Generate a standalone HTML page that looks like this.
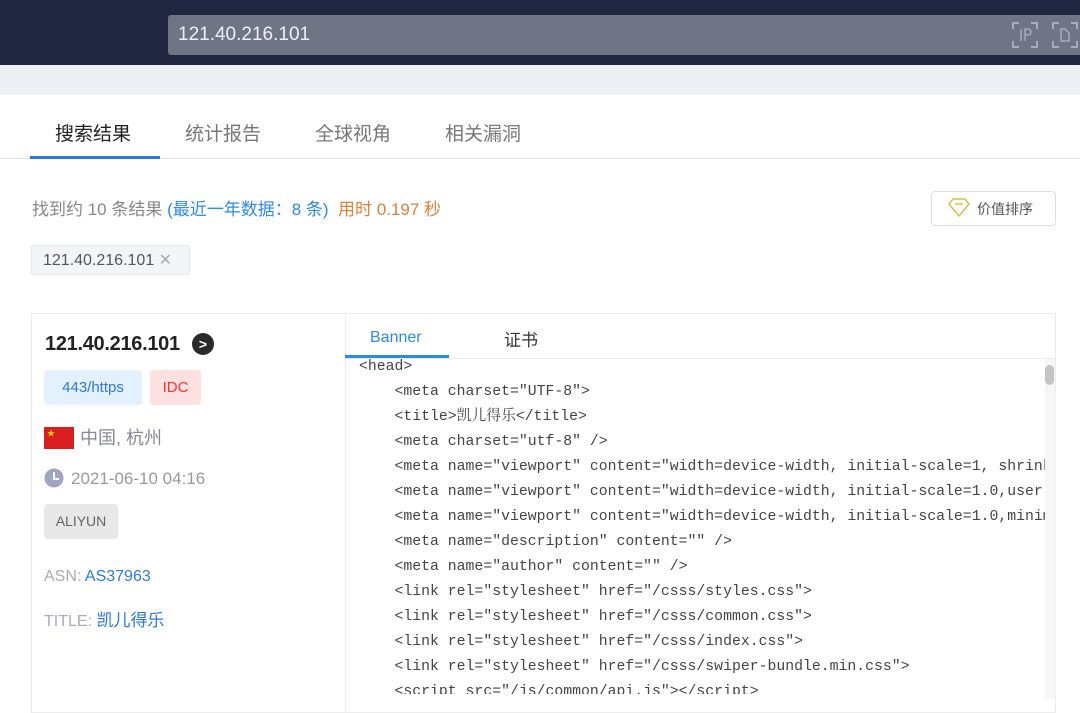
<!DOCTYPE html>
<html><head><meta charset="utf-8"><style>
*{margin:0;padding:0;box-sizing:border-box}
body{width:1080px;height:694px;overflow:hidden;background:#fff;font-family:"Liberation Sans","Noto Sans CJK SC",sans-serif;position:relative}
.a{position:absolute}
.code{position:absolute;left:359px;top:355px;width:686px;height:339px;overflow:hidden;font-family:"Liberation Mono","Noto Serif CJK SC",monospace;font-size:14.8px;line-height:25px;color:#444;white-space:pre}
</style></head><body>
<div class="a" style="left:0;top:0;width:1080px;height:65px;background:#20263f"></div>
<div class="a" style="left:168px;top:15px;width:920px;height:40px;background:#6f7585;border-radius:3px"></div>
<div class="a" style="left:178px;top:22px;font-size:19px;color:#eef;line-height:26px">121.40.216.101</div>
<svg class="a" style="left:1012px;top:22px" width="26" height="26" viewBox="0 0 26 26" fill="none" stroke="#aab" stroke-width="2"><path d="M1 7V1h6M19 1h6v6M25 19v6h-6M7 25H1v-6"/><path d="M9 7v12M13 19V7h3a3 3 0 0 1 0 6h-3" stroke-width="1.5"/></svg>
<svg class="a" style="left:1052px;top:22px" width="26" height="26" viewBox="0 0 26 26" fill="none" stroke="#aab" stroke-width="2"><path d="M1 7V1h6M19 1h6v6M25 19v6h-6M7 25H1v-6"/><path d="M9 7v12h8V11l-4-4z" stroke-width="1.5"/></svg>
<div class="a" style="left:0;top:65px;width:1080px;height:30px;background:#eeeff4"></div>
<div class="a" style="left:0;top:158px;width:1080px;height:1px;background:#e4e4e4"></div>
<div class="a" style="left:30px;top:156px;width:130px;height:3px;background:#2d7ad6"></div>
<div class="a" style="left:55px;top:119px;font-size:19px;color:#222">搜索结果</div>
<div class="a" style="left:185px;top:119px;font-size:19px;color:#777">统计报告</div>
<div class="a" style="left:315px;top:119px;font-size:19px;color:#777">全球视角</div>
<div class="a" style="left:445px;top:119px;font-size:19px;color:#777">相关漏洞</div>
<div class="a" style="left:32px;top:195px;font-size:17px;color:#888;white-space:nowrap">找到约 10 条结果 <span style="color:#2d8ae6">(最近一年数据：8 条)</span> &nbsp;<span style="color:#e0803a">用时 0.197 秒</span></div>
<div class="a" style="left:931px;top:191px;width:125px;height:35px;border:1px solid #ddd;border-radius:4px"></div>
<svg class="a" style="left:948px;top:198px" width="22" height="20" viewBox="0 0 22 20" fill="none" stroke="#e0b84a" stroke-width="1.5"><path d="M1 6L5 1h12l4 5-10 12z"/><path d="M7 6h8"/></svg>
<div class="a" style="left:977px;top:199px;font-size:14px;color:#555">价值排序</div>
<div class="a" style="left:31px;top:245px;width:159px;height:30px;background:#f4f5f9;border:1px solid #e8e8ee;border-radius:2px"></div>
<div class="a" style="left:43px;top:250px;font-size:16px;color:#555">121.40.216.101 <span style="color:#aaa">✕</span></div>
<div class="a" style="left:31px;top:313px;width:1025px;height:400px;border:1px solid #ececec"></div>
<div class="a" style="left:345px;top:313px;width:1px;height:400px;background:#ececec"></div>
<div class="a" style="left:346px;top:358px;width:709px;height:1px;background:#ececec"></div>
<div class="a" style="left:345px;top:355px;width:104px;height:3px;background:#2d8ae6"></div>
<div class="a" style="left:370px;top:329px;font-size:16px;color:#2d8ae6">Banner</div>
<div class="a" style="left:504px;top:326px;font-size:17px;color:#333">证书</div>
<div class="a" style="left:1045px;top:359px;width:10px;height:340px;background:#f6f6f6"></div>
<div class="a" style="left:1045px;top:365px;width:9px;height:20px;background:#c4c4c4;border-radius:5px"></div>
<div class="a" style="left:45px;top:333px;font-size:20px;font-weight:bold;color:#222;letter-spacing:-0.3px">121.40.216.101</div>
<div class="a" style="left:192px;top:333px;width:22px;height:22px;border-radius:50%;background:#2a2a2a;color:#fff;font-size:14px;font-weight:bold;text-align:center;line-height:22px">&gt;</div>
<div class="a" style="left:44px;top:370px;width:98px;height:35px;background:#e3f0fd;border-radius:4px;color:#2d7ad6;font-size:15px;text-align:center;line-height:35px">443/https</div>
<div class="a" style="left:150px;top:370px;width:51px;height:35px;background:#fde0df;border-radius:4px;color:#f33;font-size:15px;text-align:center;line-height:35px">IDC</div>
<div class="a" style="left:44px;top:427px;width:30px;height:22px;background:#d81e1e"></div>
<div class="a" style="left:47px;top:428px;font-size:8px;color:#fd0">★</div>
<div class="a" style="left:80px;top:424px;font-size:18px;color:#889">中国, 杭州</div>
<svg class="a" style="left:44px;top:468px" width="20" height="20" viewBox="0 0 20 20"><circle cx="10" cy="10" r="9.5" fill="#a0a6c0"/><path d="M10 4v7h5" stroke="#fff" stroke-width="2" fill="none"/></svg>
<div class="a" style="left:71px;top:469px;font-size:17px;color:#999">2021-06-10 04:16</div>
<div class="a" style="left:44px;top:504px;width:74px;height:35px;background:#e8e8e8;border-radius:4px;color:#666;font-size:14px;text-align:center;line-height:35px">ALIYUN</div>
<div class="a" style="left:44px;top:568px;font-size:16px;color:#aab">ASN: <span style="color:#2d7ad6">AS37963</span></div>
<div class="a" style="left:44px;top:606px;font-size:16px;color:#aab">TITLE: <span style="color:#2d7ad6;font-size:17px">凯儿得乐</span></div>
<div class="code">&lt;head&gt;
    &lt;meta charset="UTF-8"&gt;
    &lt;title&gt;凯儿得乐&lt;/title&gt;
    &lt;meta charset="utf-8" /&gt;
    &lt;meta name="viewport" content="width=device-width, initial-scale=1, shrink-to-fit=no"&gt;
    &lt;meta name="viewport" content="width=device-width, initial-scale=1.0,user-scalable=no"&gt;
    &lt;meta name="viewport" content="width=device-width, initial-scale=1.0,minimum-scale=1.0"&gt;
    &lt;meta name="description" content="" /&gt;
    &lt;meta name="author" content="" /&gt;
    &lt;link rel="stylesheet" href="/csss/styles.css"&gt;
    &lt;link rel="stylesheet" href="/csss/common.css"&gt;
    &lt;link rel="stylesheet" href="/csss/index.css"&gt;
    &lt;link rel="stylesheet" href="/csss/swiper-bundle.min.css"&gt;
    &lt;script src="/js/common/api.js"&gt;&lt;/script&gt;</div>
</body></html>
